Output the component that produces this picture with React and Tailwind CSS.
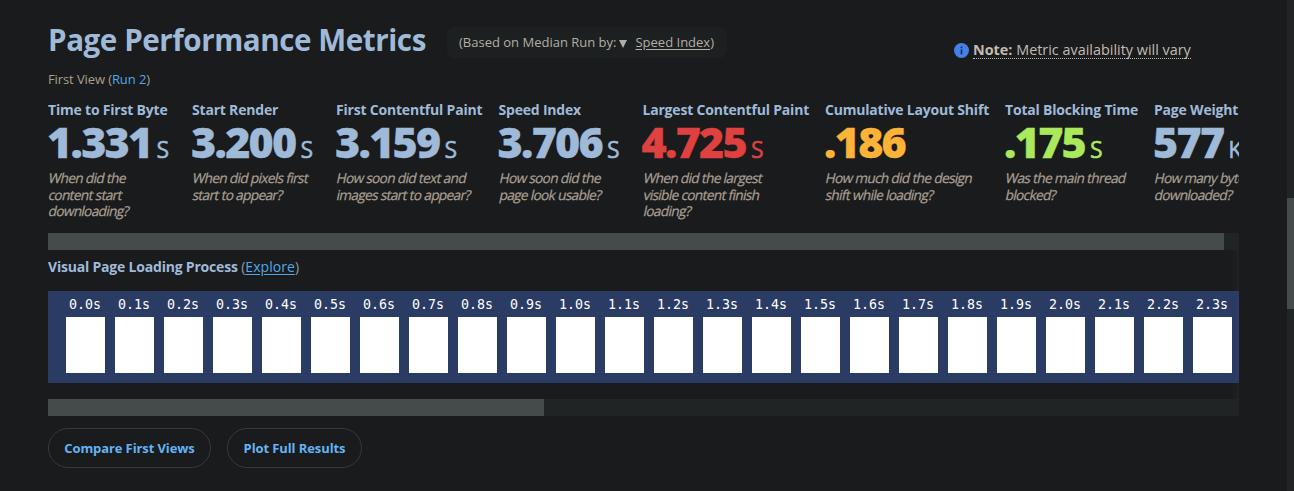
const metrics = [
  { label: "Time to First Byte", value: "1.331", unit: "S", lines: ["When did the", "content start", "downloading?"], width: "w-[144px]", color: "text-[#9fbad9]" },
  { label: "Start Render", value: "3.200", unit: "S", lines: ["When did pixels first", "start to appear?"], width: "w-[144px]", color: "text-[#9fbad9]" },
  { label: "First Contentful Paint", value: "3.159", unit: "S", lines: ["How soon did text and", "images start to appear?"], width: "w-[162.5px]", color: "text-[#9fbad9]" },
  { label: "Speed Index", value: "3.706", unit: "S", lines: ["How soon did the", "page look usable?"], width: "w-[144px]", color: "text-[#9fbad9]" },
  { label: "Largest Contentful Paint", value: "4.725", unit: "S", lines: ["When did the largest", "visible content finish", "loading?"], width: "w-[182.5px]", color: "text-[#df4040]" },
  { label: "Cumulative Layout Shift", value: ".186", unit: "", lines: ["How much did the design", "shift while loading?"], width: "w-[180px]", color: "text-[#fbb437]" },
  { label: "Total Blocking Time", value: ".175", unit: "S", lines: ["Was the main thread", "blocked?"], width: "w-[149px]", color: "text-[#aae95b]" },
  { label: "Page Weight", value: "577", unit: "KB", lines: ["How many bytes", "downloaded?"], width: "w-[120px]", color: "text-[#9fbad9]" },
];

const frames = Array.from({ length: 24 }, (_, i) => (i / 10).toFixed(1) + "s");

function Metric({ label, value, unit, lines, width, color }) {
  return (
    <div className={`${width} shrink-0 whitespace-nowrap`}>
      <h3 className="text-[14px] leading-5 font-bold tracking-[-0.2px] text-[#9fbad9]">{label}</h3>
      <p className={`flex h-[46px] items-baseline ${color}`}>
        <span className="-ml-px text-[43px] leading-[43px] font-extrabold tracking-[-1.75px] [-webkit-text-stroke:0.3px_currentColor]">{value}</span>
        <span className="ml-[5px] text-[23px] leading-[30px] [-webkit-text-stroke:0.5px_currentColor]">{unit}</span>
      </p>
      <div className="-ml-px pt-[4px] text-[13.65px] leading-[16.5px] tracking-[-0.66px] text-[#a99f92] [-webkit-text-stroke:0.25px_currentColor]">
        {lines.map((line) => (
          <div key={line} className="w-max origin-bottom-left -skew-x-12">{line}</div>
        ))}
      </div>
    </div>
  );
}

function ScrollTrack({ thumb }) {
  return (
    <div className="h-[17px] w-full bg-[#202425]">
      <div className={`h-full bg-[#454a4b] ${thumb}`} />
    </div>
  );
}

function PillButton({ children, width }) {
  return (
    <button className={`${width} h-10 rounded-full border border-[#36393b] pt-px text-[13px] font-bold tracking-[-0.1px] whitespace-nowrap text-[#63b4f5]`}>
      {children}
    </button>
  );
}

export default function App() {
  return (
    <div className="flex h-[491px] w-[1294px] overflow-hidden bg-[#1a1b1c] font-['Open_Sans',sans-serif] text-[#a99f92]">
      <main className="ml-12 w-[1191px] shrink-0">
        <header className="flex h-[70px] items-start">
          <h2 className="mt-5 w-[399px] shrink-0 text-[29.6px] leading-10 font-bold tracking-[-0.44px] whitespace-nowrap text-[#9fbad9]">Page Performance Metrics</h2>
          <div className="mt-[27px] flex h-[31px] w-[280px] shrink-0 items-center rounded-lg bg-[#1d2021] pl-3 text-[13px] whitespace-nowrap text-[#b3ada3]">
            <span>(Based on Median Run by:</span>
            <svg viewBox="0 0 8 8" className="mt-[3px] ml-[3px] h-2 w-2 fill-current"><path d="M0 0h8L4 8z" /></svg>
            <span className="ml-2 pt-px"><span className="underline underline-offset-2">Speed Index</span>)</span>
          </div>
          <div className="mt-10 ml-[227px] flex h-5 items-center text-[14.4px] whitespace-nowrap text-[#c2bcb2]">
            <svg viewBox="0 0 14 14" className="mr-1 h-[15px] w-[15px]">
              <circle cx="7" cy="7" r="7" fill="#4580e8" />
              <path d="M6.2 3.3h1.6v1.5H6.2zM6.2 6h1.6v4.6H6.2z" fill="#1a2b58" />
            </svg>
            <span className="h-[18px] border-b border-dotted border-[#c2bcb2] leading-[17px]"><b>Note:</b> Metric availability will vary</span>
          </div>
        </header>
        <p className="h-[30px] text-[13px] leading-[19px] tracking-[-0.1px]">First View (<a className="text-[#4fa9e8]">Run 2</a>)</p>
        <section className="flex h-[133px] overflow-hidden">
          {metrics.map((metric) => <Metric key={metric.label} {...metric} />)}
        </section>
        <ScrollTrack thumb="w-[1176px]" />
        <div className="flex h-[149px] flex-col bg-[linear-gradient(to_left,#212223,#1a1b1c_8px)]">
          <h3 className="h-[41px] pt-[7px] text-[14px] leading-5 font-bold tracking-[-0.2px] text-[#9fbad9]">
            Visual Page Loading Process <span className="font-normal tracking-[0.05px] text-[#8f9aa6]">(<a className="text-[#4fa9e8] underline underline-offset-2">Explore</a>)</span>
          </h3>
          <div className="flex h-[92px] gap-[10px] overflow-hidden bg-[#2a3b64] pl-[18px]">
            {frames.map((time) => (
              <div key={time} className="w-[39px] shrink-0">
                <div className="h-[26px] pl-[3px] font-['DejaVu_Sans_Mono',monospace] text-[13.3px] leading-[28px] whitespace-nowrap text-white">{time}</div>
                <div className="h-14 bg-white" />
              </div>
            ))}
          </div>
        </div>
        <ScrollTrack thumb="w-[496px]" />
        <div className="mt-3 flex gap-4">
          <PillButton width="w-[163px]">Compare First Views</PillButton>
          <PillButton width="w-[135px]">Plot Full Results</PillButton>
        </div>
      </main>
      <aside className="ml-auto w-[7px] bg-[#202425] pt-[198px]">
        <div className="h-[111px] bg-[#454a4b]" />
      </aside>
    </div>
  );
}
